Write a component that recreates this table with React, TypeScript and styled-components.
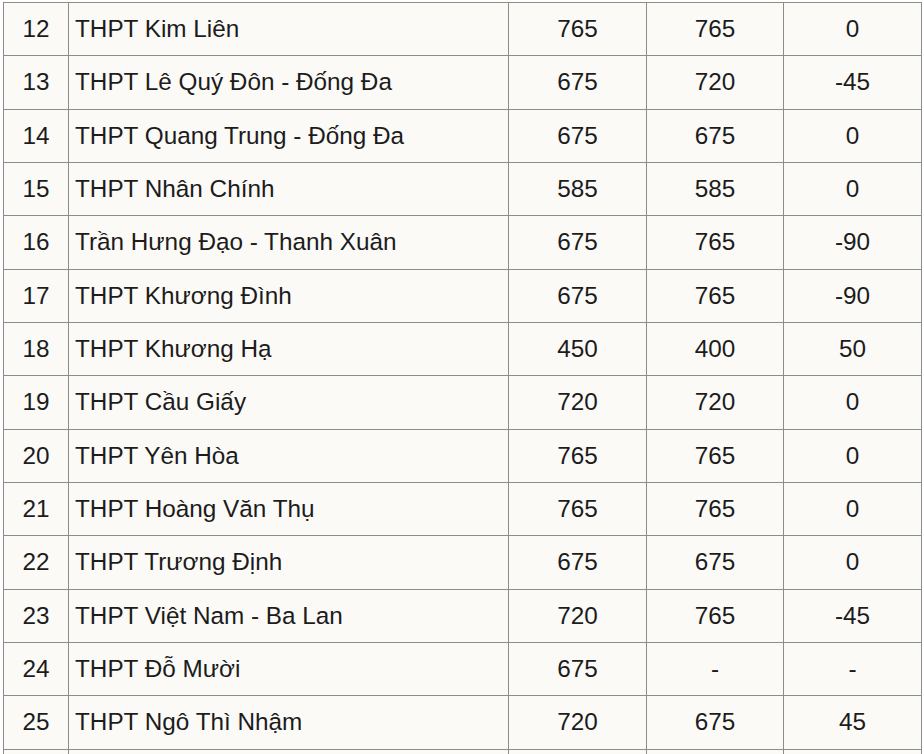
import React from 'react'
import styled, { createGlobalStyle } from 'styled-components'

const GlobalStyle = createGlobalStyle`
  html, body {
    margin: 0;
    padding: 0;
    background: #ffffff;
  }
  body {
    font-family: "Liberation Sans", Arial, sans-serif;
  }
`

const Page = styled.div`
  padding: 2px 0 0 3px;
  width: 918px;
`

const Table = styled.table`
  width: 918px;
  border-collapse: collapse;
  table-layout: fixed;
  background: #fbfaf7;
  color: #1c1c1c;
  font-size: 24.3px;
`

const Column = styled.col<{ w: number }>`
  width: ${({ w }) => w}px;
`

const Cell = styled.td<{ align?: 'left' | 'center' }>`
  border: 1px solid #8c8c8c;
  height: 52.33px;
  padding: 0 6px;
  text-align: ${({ align }) => align || 'center'};
  vertical-align: middle;
  white-space: nowrap;
`

type School = {
  no: number
  name: string
  a: string
  b: string
  diff: string
}

const schools: School[] = [
  { no: 12, name: 'THPT Kim Liên', a: '765', b: '765', diff: '0' },
  { no: 13, name: 'THPT Lê Quý Đôn - Đống Đa', a: '675', b: '720', diff: '-45' },
  { no: 14, name: 'THPT Quang Trung - Đống Đa', a: '675', b: '675', diff: '0' },
  { no: 15, name: 'THPT Nhân Chính', a: '585', b: '585', diff: '0' },
  { no: 16, name: 'Trần Hưng Đạo - Thanh Xuân', a: '675', b: '765', diff: '-90' },
  { no: 17, name: 'THPT Khương Đình', a: '675', b: '765', diff: '-90' },
  { no: 18, name: 'THPT Khương Hạ', a: '450', b: '400', diff: '50' },
  { no: 19, name: 'THPT Cầu Giấy', a: '720', b: '720', diff: '0' },
  { no: 20, name: 'THPT Yên Hòa', a: '765', b: '765', diff: '0' },
  { no: 21, name: 'THPT Hoàng Văn Thụ', a: '765', b: '765', diff: '0' },
  { no: 22, name: 'THPT Trương Định', a: '675', b: '675', diff: '0' },
  { no: 23, name: 'THPT Việt Nam - Ba Lan', a: '720', b: '765', diff: '-45' },
  { no: 24, name: 'THPT Đỗ Mười', a: '675', b: '-', diff: '-' },
  { no: 25, name: 'THPT Ngô Thì Nhậm', a: '720', b: '675', diff: '45' },
  { no: 26, name: '', a: '', b: '', diff: '' },
]

const App = () => (
  <>
    <GlobalStyle />
    <Page>
      <Table>
        <colgroup>
          <Column w={65} />
          <Column w={440} />
          <Column w={138} />
          <Column w={137} />
          <Column w={138} />
        </colgroup>
        <tbody>
          {schools.map((s) => (
            <tr key={s.no}>
              <Cell>{s.name ? s.no : ''}</Cell>
              <Cell align="left">{s.name}</Cell>
              <Cell>{s.a}</Cell>
              <Cell>{s.b}</Cell>
              <Cell>{s.diff}</Cell>
            </tr>
          ))}
        </tbody>
      </Table>
    </Page>
  </>
)

export default App
